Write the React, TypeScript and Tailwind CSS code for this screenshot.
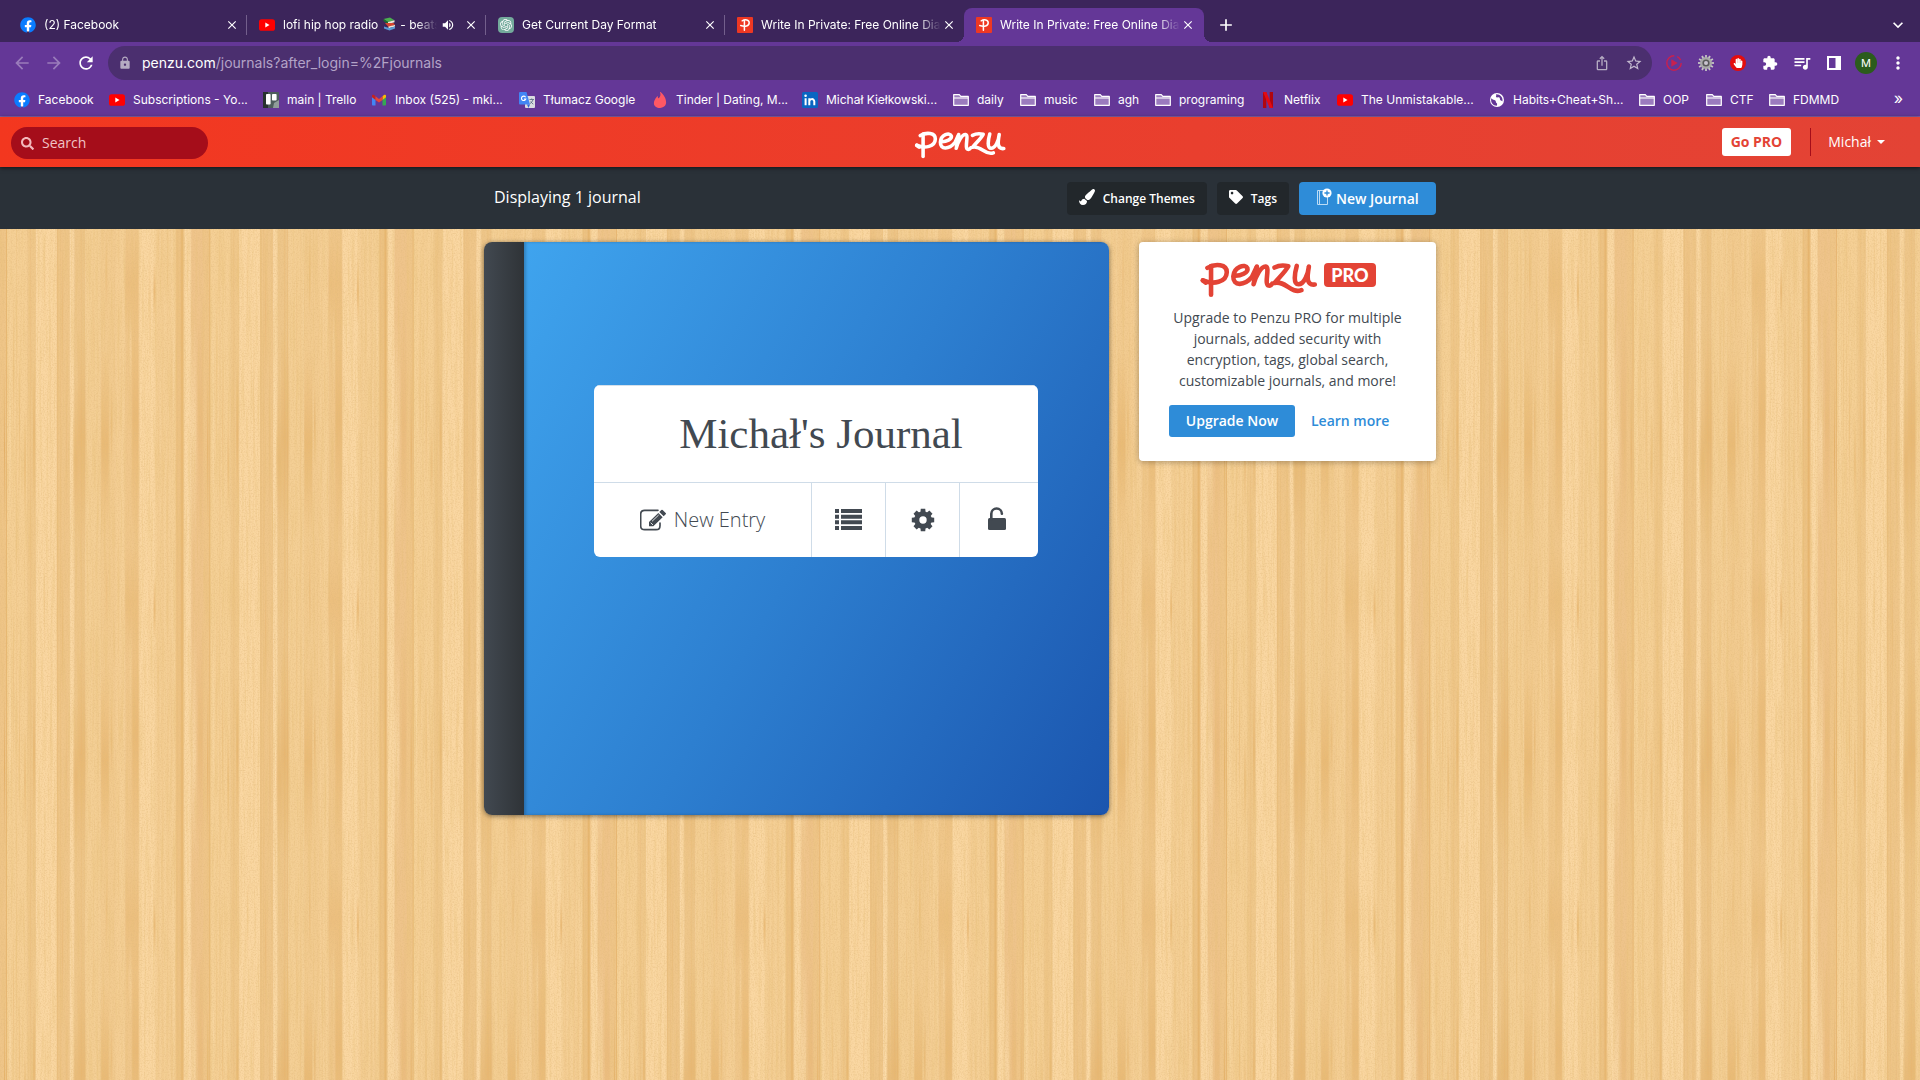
import type { ReactNode } from "react";
import {
  MdAdd,
  MdArrowBack,
  MdArrowForward,
  MdClose,
  MdExpandMore,
  MdExtension,
  MdIosShare,
  MdLock,
  MdMoreVert,
  MdQueueMusic,
  MdRefresh,
  MdStarBorder,
  MdVolumeUp,
} from "react-icons/md";
import { FaFacebook, FaHandPaper, FaPaintBrush, FaSearch, FaTag } from "react-icons/fa";
import { SiOpenai, SiTinder } from "react-icons/si";

/* ---------- small favicons ---------- */

const FacebookIcon = () => (
  <span className="block size-4 shrink-0 bg-[radial-gradient(circle,white_6px,transparent_7px)]">
    <FaFacebook className="size-4 text-[#0a7cff]" />
  </span>
);

const YoutubeIcon = () => (
  <svg viewBox="0 0 16 16" className="size-4 shrink-0">
    <rect x="0" y="2.2" width="16" height="11.6" rx="2.6" fill="#ff0000" />
    <path d="M6.3 5.6v4.8L10.5 8z" fill="#fff" />
  </svg>
);

const PenzuIcon = () => (
  <svg viewBox="0 0 16 16" className="size-4 shrink-0">
    <rect width="16" height="16" rx="1" fill="#ee3823" />
    <g fill="none" stroke="#fff" strokeWidth="1.500" strokeLinecap="round">
      <path d="M7.4 3.4v9.8" />
      <path d="M5.2 3.8C8 2 12.2 2.600 12.200 5.700 12.200 9.200 8 9.900 3.700 8.500" />
    </g>
  </svg>
);

const ChatIcon = () => (
  <span className="flex size-4 shrink-0 items-center justify-center rounded-sm bg-[#74aa9c]">
    <SiOpenai className="size-3 text-white" />
  </span>
);

const TrelloIcon = () => (
  <svg viewBox="0 0 16 16" className="size-4 shrink-0">
    <rect width="16" height="16" rx="1" fill="#4d5d5c" />
    <path d="M0 0h5v16H0z" fill="#27322f" />
    <rect x="3" y="2" width="4.600" height="10.500" rx=".8" fill="#fff" />
    <rect x="9" y="2" width="4.600" height="6.500" rx=".8" fill="#fff" />
    <path d="M11 11l5-3v8h-6z" fill="#8f9c9a" />
  </svg>
);

const GmailIcon = () => (
  <svg viewBox="0 0 16 16" className="size-4 shrink-0">
    <path d="M1 4v8.500c0 .5.400 1 1 1h2.500V7z" fill="#4285f4" />
    <path d="M15 4v8.500c0 .5-.4 1-1 1h-2.500V7z" fill="#34a853" />
    <path d="M11.500 4.200L13 3c1-.7 2 0 2 1v1.300l-3.500 2.600z" fill="#fbbc04" />
    <path d="M4.500 4.200L3 3C2 2.300 1 3 1 4v1.300l3.500 2.600z" fill="#c5221f" />
    <path d="M4.500 4.200L8 6.900l3.500-2.700v3.700L8 10.500 4.500 7.900z" fill="#ea4335" />
  </svg>
);

const TranslateIcon = () => (
  <svg viewBox="0 0 16 16" className="size-4 shrink-0">
    <rect x="6" y="4" width="10" height="12" rx="1" fill="#dadce0" />
    <path d="M1 0h6.500l3.500 12.500H1a1 1 0 01-1-1V1a1 1 0 011-1z" fill="#4285f4" />
    <path
      d="M6.600 5.200A2.200 2.200 0 106.800 7H4.900"
      fill="none"
      stroke="#fff"
      strokeWidth="1.100"
    />
    <path d="M10.500 7.500h4.500M12.700 6.500v1M14 7.500c-.5 2-2 3.500-3 4.200M11.800 9.500c.6 1.200 1.500 2 2.500 2.700" fill="none" stroke="#5f6f88" strokeWidth=".9" />
    <path d="M8 12.500h3L9.500 16z" fill="#3367d6" />
  </svg>
);

const TinderIcon = () => <SiTinder className="size-4 shrink-0 text-[#ff5864]" />;

const LinkedinIcon = () => (
  <svg viewBox="0 0 16 16" className="size-4 shrink-0">
    <rect width="16" height="16" rx="1.500" fill="#0a66c2" />
    <g fill="none" stroke="#fff" strokeWidth="2">
      <path d="M3.600 6.200v7M7.300 6.200v7M7.300 9.600c0-3 5-3.600 5 0v3.600" />
    </g>
    <circle cx="3.600" cy="3.700" r="1.300" fill="#fff" />
  </svg>
);

const NetflixIcon = () => (
  <svg viewBox="0 0 16 16" className="size-4 shrink-0">
    <path d="M3 0h3.300v16H3zM9.700 0H13v16H9.700z" fill="#b1060f" />
    <path d="M3 0h3.300L13 16H9.700z" fill="#e50914" />
  </svg>
);

const FolderIcon = () => (
  <svg viewBox="0 0 16 16" className="size-4 shrink-0">
    <path
      d="M.7 13.300V2.600h5.600l1.500 1.800h7.500v8.900z"
      fill="#b8a0d2"
      fillOpacity=".65"
      stroke="#fff"
      strokeWidth="1.200"
      strokeLinejoin="round"
    />
    <path d="M.7 6h14.600" stroke="#fff" strokeWidth="1.100" />
  </svg>
);

const GlobeIcon = () => (
  <svg viewBox="0 0 16 16" className="size-4 shrink-0">
    <circle cx="8" cy="8" r="7" fill="#fff" />
    <path
      d="M2.300 6.200c1.500 1.800 2.800 1.300 4 2.300 1 1 .2 2 1.200 2.600 1 .7.600 2 .300 2.600-3.800 0-6.500-3.400-5.500-7.500zM7 2.300c1 1.300-.8 2 .4 3 1.500.6 1.800-.6 3 .3 1 .8 0 2.400 1.400 2.800 1.200.3 1.500.7 1.600 1C14.300 5.500 11 2 7 2.300z"
      fill="#643797"
    />
  </svg>
);

const BooksGlyph = () => (
  <svg viewBox="0 0 14 14" role="img" aria-label="books" className="mx-1 inline-block size-3.5 align-[-2px]">
    <path d="M1.500 2L8 .5l4.500 2.800L6 5z" fill="#4caf50" />
    <path d="M1.500 2v2L6 7V5z" fill="#1b6e2c" />
    <path d="M6 5l6.500-1.700v2L6 7z" fill="#efe9dc" />
    <path d="M3 6l8.500 0 1.500 2-6.500 2z" fill="#d8452f" />
    <path d="M6.500 9.500L13 8v1.500l-6.500 1.700z" fill="#efe9dc" />
    <path d="M2 9.500l5 1.500 6-1.500v2L7.500 13.500 2 11.500z" fill="#5b9bd5" />
  </svg>
);

/* ---------- browser chrome ---------- */

type TabData = { title: ReactNode; icon: ReactNode; audio?: boolean; active?: boolean };

const tabs: TabData[] = [
  { title: "(2) Facebook", icon: <FacebookIcon /> },
  {
    title: (
      <>
        lofi hip hop radio
        <BooksGlyph />- beats
      </>
    ),
    icon: <YoutubeIcon />,
    audio: true,
  },
  { title: "Get Current Day Format", icon: <ChatIcon /> },
  { title: "Write In Private: Free Online Dia", icon: <PenzuIcon /> },
  { title: "Write In Private: Free Online Dia", icon: <PenzuIcon />, active: true },
];

function Tab({ title, icon, audio, active, separator }: TabData & { separator: boolean }) {
  return (
    <div
      className={
        active
          ? "relative flex h-[34px] w-60 items-center rounded-t-lg bg-[#643797] pr-2 pl-3"
          : "relative flex h-[34px] w-[239px] items-center pr-[7px] pl-3"
      }
    >
      {active && (
        <>
          <span className="absolute bottom-0 -left-2 size-2 bg-[radial-gradient(circle_at_0_0,transparent_8px,#643797_8px)]" />
          <span className="absolute -right-2 bottom-0 size-2 bg-[radial-gradient(circle_at_100%_0,transparent_8px,#643797_8px)]" />
        </>
      )}
      {icon}
      <span className="ml-2 min-w-0 flex-1 overflow-hidden whitespace-nowrap [mask-image:linear-gradient(to_right,black_87%,transparent)]">
        {title}
      </span>
      {audio && <MdVolumeUp className="mr-2 ml-1 size-3.5 shrink-0" />}
      <button type="button" aria-label="Close tab" className="flex size-4 shrink-0 items-center justify-center">
        <MdClose className="size-3.5" />
      </button>
      {separator && <span className="absolute top-[7px] right-0 h-5 w-px bg-[#735f8c]" />}
    </div>
  );
}

function TabStrip() {
  return (
    <div className="flex h-[42px] items-end bg-[#3c255b] pl-2 text-xs text-white">
      {tabs.map((tab, i) => (
        <Tab key={i} {...tab} separator={i < 3} />
      ))}
      <button type="button" aria-label="New tab" className="ml-3 flex h-[34px] w-5 items-center justify-center">
        <MdAdd className="size-5 shrink-0" />
      </button>
      <button type="button" aria-label="Search tabs" className="mr-3 ml-auto flex h-[34px] w-5 items-center justify-center">
        <MdExpandMore className="size-5 shrink-0" />
      </button>
    </div>
  );
}

function IconButton({ label, children }: { label: string; children: ReactNode }) {
  return (
    <button type="button" aria-label={label} className="flex h-8 w-8 shrink-0 items-center justify-center">
      {children}
    </button>
  );
}

const gearTeeth = Array.from({ length: 12 }, (_, i) => i * 30);

function AddressBar() {
  return (
    <div className="flex h-[42px] items-center pr-[6px] pl-[6px] text-white">
      <IconButton label="Back">
        <MdArrowBack className="size-5 text-[#9a7cbb]" />
      </IconButton>
      <IconButton label="Forward">
        <MdArrowForward className="size-5 text-[#9a7cbb]" />
      </IconButton>
      <IconButton label="Reload">
        <MdRefresh className="size-5" />
      </IconButton>
      <div className="ml-1.5 flex h-[34px] min-w-0 flex-1 items-center rounded-full bg-[#4b2f6f] pr-0.5 pl-2.5">
        <MdLock className="size-3.5 shrink-0 text-[#b5abc2]" />
        <a href="#address" className="ml-2.5 flex-1 text-sm text-[#b3a3c7]">
          <span className="text-white">penzu.com</span>/journals?after_login=%2Fjournals
        </a>
        <IconButton label="Share">
          <MdIosShare className="size-4 text-[#b5abc2]" />
        </IconButton>
        <IconButton label="Bookmark this page">
          <MdStarBorder className="size-[18px] text-[#c3b9cf]" />
        </IconButton>
      </div>
      <div className="ml-1.5 flex items-center">
        <IconButton label="Video extension">
          <svg viewBox="0 0 16 16" className="size-4">
            <circle cx="8" cy="8" r="7.200" fill="none" stroke="#c9204e" strokeWidth="1.400" strokeDasharray="34 3 5 3" />
            <path d="M5.300 4.300v7.400L11.700 8z" fill="#c9204e" />
          </svg>
        </IconButton>
        <IconButton label="Gear extension">
          <svg viewBox="0 0 16 16" className="size-4">
            {gearTeeth.map((a) => (
              <rect key={a} x="7.100" y="0" width="1.800" height="4" fill="#c4c4c4" transform={`rotate(${a} 8 8)`} />
            ))}
            <circle cx="8" cy="8" r="6" fill="#a9a9a9" />
            <circle cx="8" cy="8" r="3.600" fill="#5a5a5a" />
            <circle cx="8" cy="8" r="2" fill="#c9c4cf" />
          </svg>
        </IconButton>
        <IconButton label="Ad blocker">
          <span className="flex size-4 items-center justify-center rounded-full bg-[#e40d0d]">
            <FaHandPaper className="size-2.5" />
          </span>
        </IconButton>
        <IconButton label="Extensions">
          <MdExtension className="size-4" />
        </IconButton>
        <IconButton label="Media controls">
          <MdQueueMusic className="size-5" />
        </IconButton>
        <IconButton label="Side panel">
          <svg viewBox="0 0 16 16" className="size-4">
            <path d="M1 1h14v14H1zM3 3v10h6.500V3z" fill="#fff" fillRule="evenodd" />
          </svg>
        </IconButton>
        <IconButton label="Profile">
          <span className="flex size-[22px] items-center justify-center rounded-full bg-[#2b5c1c] text-[11px]">M</span>
        </IconButton>
        <IconButton label="Browser menu">
          <MdMoreVert className="size-5" />
        </IconButton>
      </div>
    </div>
  );
}

const bookmarks: { label: string; icon: ReactNode }[] = [
  { label: "Facebook", icon: <FacebookIcon /> },
  { label: "Subscriptions - Yo...", icon: <YoutubeIcon /> },
  { label: "main | Trello", icon: <TrelloIcon /> },
  { label: "Inbox (525) - mki...", icon: <GmailIcon /> },
  { label: "Tłumacz Google", icon: <TranslateIcon /> },
  { label: "Tinder | Dating, M...", icon: <TinderIcon /> },
  { label: "Michał Kiełkowski...", icon: <LinkedinIcon /> },
  { label: "daily", icon: <FolderIcon /> },
  { label: "music", icon: <FolderIcon /> },
  { label: "agh", icon: <FolderIcon /> },
  { label: "programing", icon: <FolderIcon /> },
  { label: "Netflix", icon: <NetflixIcon /> },
  { label: "The Unmistakable...", icon: <YoutubeIcon /> },
  { label: "Habits+Cheat+Sh...", icon: <GlobeIcon /> },
  { label: "OOP", icon: <FolderIcon /> },
  { label: "CTF", icon: <FolderIcon /> },
  { label: "FDMMD", icon: <FolderIcon /> },
];

function BookmarksBar() {
  return (
    <nav
      aria-label="Bookmarks"
      className="flex h-[33px] items-center border-b border-[#8360a9] pb-px pl-3.5 text-xs text-white"
    >
      <div className="grid grid-cols-[95px_154px_108px_148px_133px_150px_151px_67px_74px_61px_105px_77px_152px_150px_67px_63px_80px] whitespace-nowrap">
        {bookmarks.map((b, i) => (
          <a key={i} href="#bookmark" className="flex items-center gap-2">
            {b.icon}
            {b.label}
          </a>
        ))}
      </div>
      <button type="button" aria-label="More bookmarks" className="mr-[17px] ml-auto pb-1 text-base">
        »
      </button>
    </nav>
  );
}

/* ---------- Penzu ---------- */

function PenzuLogo({ className }: { className: string }) {
  return (
    <svg viewBox="236 94 360 110" role="img" aria-label="penzu" className={className}>
      <g fill="none" stroke="currentColor" strokeWidth="14" strokeLinecap="round" strokeLinejoin="round">
        <path d="M271 106v88" />
        <path d="M260 112C284 98 320 100 319 126C318 156 278 164 246 150" />
        <path d="M246 150l9 7" />
        <path d="M340 136C362 138 386 126 382 113C376 98 341 108 339 138C338 168 372 168 396 140L409 112" />
        <path d="M411 108L401 162C408 136 424 107 438 108C452 110 432 162 447 166C452 167 455 165 458 160" />
        <path d="M465 111C480 103 496 104 507 107C498 124 478 142 465 158C500 150 514 192 547 180" />
        <path d="M533 106C526 130 522 162 538 162C556 162 568 130 570 108C564 140 562 166 588 163" />
      </g>
    </svg>
  );
}

function PenzuHeader() {
  return (
    <header className="relative z-10 grid h-[50px] grid-cols-[1fr_auto_1fr] items-center bg-linear-to-r from-[#f3371f] to-[#e34335] pt-0.5 shadow-[0_1px_4px_rgba(0,0,0,0.6)]">
      <label className="ml-[11px] flex h-8 w-[197px] items-center rounded-full bg-[#a50d1a] pl-2.5 text-[#f3b9bd]">
        <FaSearch className="size-[13px] shrink-0" />
        <span className="sr-only">Search</span>
        <input
          type="search"
          placeholder="Search"
          className="ml-2 w-full min-w-0 bg-transparent text-sm outline-none placeholder:text-[#f0c3c6]"
        />
      </label>
      <PenzuLogo className="mt-1 h-7 w-[92px] text-white" />
      <div className="mb-0.5 flex items-center justify-end pr-[35px] text-sm text-white">
        <button type="button" className="h-7 rounded-[3px] bg-white px-[9px] font-bold text-[#e34335]">
          Go PRO
        </button>
        <span className="ml-[19px] h-7 w-px bg-[#a50d1a]" />
        <button type="button" className="ml-[17px] flex items-center gap-1.5">
          Michał
          <svg viewBox="0 0 8 4" className="h-1 w-2">
            <path d="M0 0h8L4 4z" fill="#fff" />
          </svg>
        </button>
      </div>
    </header>
  );
}

function NewJournalIcon() {
  return (
    <svg viewBox="0 0 16 18" className="mb-1 h-[18px] w-4 shrink-0">
      <path d="M1.500 2.500h10v14h-10zM3.500 2.500v14" fill="none" stroke="#bcdcf5" strokeWidth="1" />
      <circle cx="11" cy="5" r="4.600" fill="#fff" />
      <path d="M11 2.400v5.200M8.400 5h5.200" stroke="#2e8cd8" strokeWidth="1.300" />
    </svg>
  );
}

function ActionBar() {
  return (
    <div className="bg-[#2a3138] text-white">
      <div className="mx-auto flex h-[62px] w-full max-w-[952px] items-center">
        <h1 className="mb-0.5 pl-2.5 text-base">Displaying 1 journal</h1>
        <div className="ml-auto flex gap-2.5">
          <button
            type="button"
            className="flex h-[33px] items-center gap-2 rounded-sm bg-[#22272b] px-3 pt-0.5 text-xs font-semibold"
          >
            <FaPaintBrush className="mb-1 size-4" />
            Change Themes
          </button>
          <button
            type="button"
            className="flex h-[33px] items-center gap-2 rounded-sm bg-[#22272b] px-3 pt-0.5 text-xs font-semibold"
          >
            <FaTag className="mb-1 size-3.5" />
            Tags
          </button>
          <button
            type="button"
            className="flex h-[33px] w-[137px] items-center gap-1 rounded-sm bg-[#2e8cd8] pt-0.5 pl-[17px] text-sm font-semibold"
          >
            <NewJournalIcon />
            New Journal
          </button>
        </div>
      </div>
    </div>
  );
}

const cogTeeth = [0, 45, 90, 135, 180, 225, 270, 315];

function JournalBook() {
  return (
    <article className="flex h-[573px] w-[625px] shrink-0 overflow-hidden rounded-lg shadow-[0_1px_5px_rgba(0,0,0,0.5)]">
      <div className="w-10 shrink-0 bg-linear-to-r from-[#424951] to-[#2f3337]" />
      <div className="flex-1 bg-linear-[120deg] from-[#3fa4ee] via-[#2d7fd0] to-[#1b55ae] pt-[143px] pl-[70px] shadow-[inset_2px_0_3px_rgba(0,0,0,0.2)]">
        <div className="w-[444px] overflow-hidden rounded-md bg-white text-[#424951]">
          <h2 className="flex h-[97px] items-center justify-center border-t border-[#d5e0ea] pl-[10px] font-['Liberation_Serif',serif] text-[43px]">
            Michał's Journal
          </h2>
          <div className="grid h-[75px] grid-cols-[218px_1fr_1fr_78px] divide-x divide-[#cfdce8] border-t border-[#cfdce8]">
            <button type="button" className="flex items-center justify-center gap-2 text-xl font-light">
              <svg viewBox="0 0 78 66" className="h-[22px] w-[26px]">
                <path
                  d="M54 4H14Q2 4 2 16V50Q2 62 14 62H48Q60 62 60 50V42"
                  fill="none"
                  stroke="currentColor"
                  strokeWidth="5"
                  strokeLinecap="round"
                />
                <path d="M27 52V39L55 12L68 25L40 52zM58 9L64 3Q66 1 68 3L77 12Q79 14 77 16L71 22z" fill="currentColor" />
                <path d="M32 41L39 48M36 37L56 18" stroke="#fff" strokeWidth="2.500" />
              </svg>
              New Entry
            </button>
            <button type="button" aria-label="View entries" className="flex items-center justify-center pb-0.5">
              <svg viewBox="0 0 27 21" className="h-[21px] w-[27px]">
                <path
                  d="M0 0h4v4H0zM6 0h21v4H6zM0 5.700h4v4H0zM6 5.700h21v4H6zM0 11.300h4v4H0zM6 11.300h21v4H6zM0 17h4v4H0zM6 17h21v4H6z"
                  fill="currentColor"
                />
              </svg>
            </button>
            <button type="button" aria-label="Journal settings" className="flex items-center justify-center">
              <svg viewBox="0 0 24 24" className="size-6">
                {cogTeeth.map((a) => (
                  <path key={a} d="M9.300 5L9.800 .8h4.400L14.700 5z" fill="currentColor" transform={`rotate(${a} 12 12)`} />
                ))}
                <circle cx="12" cy="12" r="6.200" fill="none" stroke="currentColor" strokeWidth="5" />
              </svg>
            </button>
            <button type="button" aria-label="Unlock journal" className="flex items-center justify-center pr-1 pb-1">
              <svg viewBox="0 0 18 23" className="h-[23px] w-[18px]">
                <rect x="0" y="11" width="18" height="12" rx="1.500" fill="currentColor" />
                <path d="M3.300 12V6.800a5.300 5.300 0 0110.600 0" fill="none" stroke="currentColor" strokeWidth="2.600" strokeLinecap="round" />
              </svg>
            </button>
          </div>
        </div>
      </div>
    </article>
  );
}

function ProCard() {
  return (
    <aside className="flex h-[219px] w-[297px] flex-col items-center rounded bg-white px-[30px] pt-5 shadow-[0_1px_6px_rgba(0,0,0,0.3)]">
      <div className="flex items-start gap-1.5">
        <PenzuLogo className="h-9 w-[119px] text-[#e34335]" />
        <span className="mt-px flex h-6 w-[52px] items-center justify-center rounded bg-[#e34335] font-['Lato',sans-serif] text-lg font-black text-white">
          PRO
        </span>
      </div>
      <p className="mt-[9px] text-center text-sm leading-[21px] text-[#424951]">
        Upgrade to Penzu PRO for multiple journals, added security with encryption, tags, global search, customizable
        journals, and more!
      </p>
      <div className="mt-3.5 flex w-full items-center gap-4 text-sm font-semibold">
        <button type="button" className="h-8 w-[126px] rounded-[3px] bg-[#2e8cd8] text-white">
          Upgrade Now
        </button>
        <a href="#learn-more" className="text-[#2e8cd8]">
          Learn more
        </a>
      </div>
    </aside>
  );
}

/* Plank colours of one repeating wood tile: x, width, colour. */
const planks: [number, number, string][] = [
  [0, 7, "#efc588"],
  [7, 20, "#f5d096"],
  [27, 9, "#f0c88b"],
  [36, 21, "#fad7a2"],
  [57, 13, "#efc68a"],
  [70, 4, "#fad8a4"],
  [74, 11, "#eec68a"],
  [85, 15, "#f4cf95"],
  [100, 15, "#f2cb90"],
  [115, 10, "#f5d097"],
  [125, 14, "#f0c78b"],
  [139, 16, "#fad7a2"],
  [155, 21, "#f5d097"],
  [176, 8, "#edc283"],
  [184, 7, "#fad8a4"],
  [191, 13, "#efc48b"],
];

/* Thin grain lines: x, y, width, height, opacity; negative opacity is a pale line. */
const grain: [number, number, number, number, number][] = [
  [6, 0, 1, 317, 0.35],
  [4, 140, 1, 160, 0.5],
  [13, 40, 1, 200, 0.2],
  [16, 0, 1, 317, 0.1],
  [19, 120, 1, 150, 0.3],
  [24, 180, 2, 110, 0.3],
  [30, 0, 1, 317, 0.12],
  [33, 130, 2, 150, 0.35],
  [44, 0, 1, 110, 0.2],
  [50, 60, 1, 240, 0.15],
  [57, 0, 1, 317, 0.35],
  [60, 0, 1, 317, 0.15],
  [62, 0, 1, 170, 0.3],
  [66, 120, 1, 190, 0.2],
  [73, 150, 5, 160, 0.3],
  [78, 100, 8, 217, 0.3],
  [81, 0, 1, 317, 0.15],
  [84, 0, 1, 317, 0.15],
  [93, 0, 1, 200, 0.2],
  [97, 0, 1, 317, 0.1],
  [101, 120, 8, 190, 0.35],
  [106, 0, 1, 90, 0.35],
  [111, 150, 1, 90, 0.5],
  [115, 0, 1, 317, 0.15],
  [118, 0, 1, 317, 0.1],
  [125, 0, 14, 110, 0.18],
  [132, 60, 7, 257, 0.3],
  [121, 60, 1, 180, 0.15],
  [130, 80, 1, 80, -0.6],
  [154, 30, 1, 65, 0.9],
  [149, 0, 1, 130, 0.25],
  [158, 0, 1, 317, 0.12],
  [162, 0, 1, 317, 0.14],
  [167, 0, 1, 317, 0.12],
  [171, 80, 1, 180, 0.25],
  [173, 0, 1, 200, -0.4],
  [181, 0, 2, 317, 0.35],
  [176, 0, 1, 317, 0.2],
  [191, 90, 5, 227, -0.6],
  [198, 80, 5, 230, 0.2],
  [9, 60, 2, 240, -0.4],
  [72, 130, 1, 140, -0.7],
];

function WoodTexture() {
  return (
    <svg aria-hidden="true" className="absolute inset-0 h-full w-full">
      <defs>
        <filter id="fibres" x="0" y="0" width="100%" height="100%">
          <feTurbulence type="fractalNoise" baseFrequency="0.45 0.015" numOctaves="3" seed="8" />
          <feColorMatrix values="0 0 0 0 0.8  0 0 0 0 0.52  0 0 0 0 0.18  1.600 0 0 0 -0.68" />
        </filter>
        <filter id="speckle" x="0" y="0" width="100%" height="100%">
          <feTurbulence type="fractalNoise" baseFrequency="0.7" numOctaves="2" seed="3" />
          <feColorMatrix values="0 0 0 0 0.75  0 0 0 0 0.48  0 0 0 0 0.2  1.800 0 0 0 -0.76" />
        </filter>
        <linearGradient id="dark-grain" x1="0" y1="0" x2="0" y2="1">
          <stop offset="0" stopColor="#d99a45" stopOpacity="0" />
          <stop offset="0.5" stopColor="#d99a45" />
          <stop offset="1" stopColor="#d99a45" stopOpacity="0" />
        </linearGradient>
        <linearGradient id="pale-grain" x1="0" y1="0" x2="0" y2="1">
          <stop offset="0" stopColor="#fde0b0" stopOpacity="0" />
          <stop offset="0.5" stopColor="#fde0b0" />
          <stop offset="1" stopColor="#fde0b0" stopOpacity="0" />
        </linearGradient>
        <pattern id="planks" width="203.330" height="317" patternUnits="userSpaceOnUse">
          {planks.map(([x, w, fill]) => (
            <rect key={x} x={x} y="0" width={w + 0.5} height="317" fill={fill} />
          ))}
          {grain.map(([x, y, w, h, o], i) => (
            <rect
              key={i}
              x={x}
              y={y}
              width={w}
              height={h}
              fill={h === 317 ? "#d99a45" : o < 0 ? "url(#pale-grain)" : "url(#dark-grain)"}
              opacity={Math.abs(o)}
            />
          ))}
        </pattern>
      </defs>
      <rect width="100%" height="100%" fill="url(#planks)" />
      <rect width="100%" height="100%" filter="url(#fibres)" opacity="0.55" />
      <rect width="100%" height="100%" filter="url(#speckle)" opacity="0.6" />
    </svg>
  );
}

export default function App() {
  return (
    <div className="flex min-h-screen flex-col">
      <div className="bg-[#643797] font-['Inter',sans-serif]">
        <TabStrip />
        <AddressBar />
        <BookmarksBar />
      </div>
      <div className="flex flex-1 flex-col font-['Open_Sans','Noto_Sans',sans-serif]">
        <PenzuHeader />
        <ActionBar />
        <main className="relative flex-1">
          <WoodTexture />
          <div className="relative mx-auto flex w-full max-w-[952px] items-start justify-between pt-[13px] pb-8">
            <JournalBook />
            <ProCard />
          </div>
        </main>
      </div>
    </div>
  );
}
